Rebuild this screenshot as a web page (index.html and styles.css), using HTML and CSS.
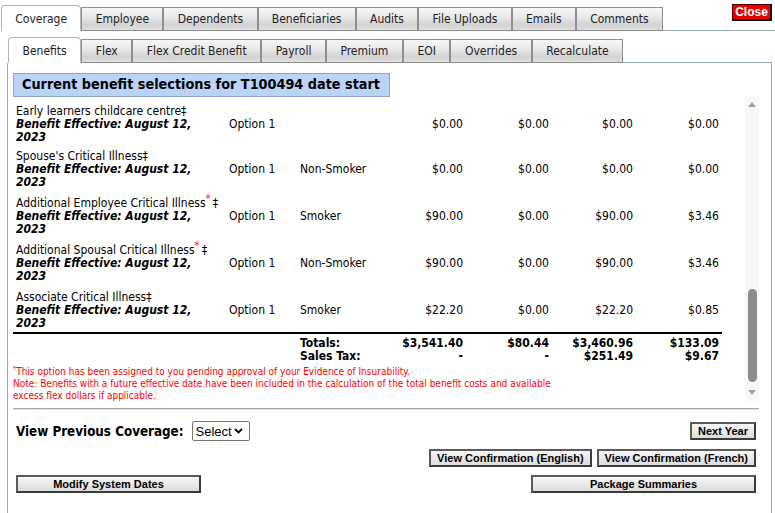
FILE: index.html
```html
<!DOCTYPE html>
<html lang="en">
<head>
<meta charset="utf-8">
<title>Coverage - Benefits</title>
<link rel="stylesheet" href="styles.css">
</head>
<body>
<div class="page">
  <div class="tabs top-tabs">
    <div class="tab active">Coverage</div>
    <div class="tab">Employee</div>
    <div class="tab">Dependents</div>
    <div class="tab">Beneficiaries</div>
    <div class="tab">Audits</div>
    <div class="tab">File Uploads</div>
    <div class="tab">Emails</div>
    <div class="tab">Comments</div>
    <div class="tab-fill top-fill"><button class="close-btn">Close</button></div>
  </div>

  <div class="section">
    <div class="tabs sub-tabs">
      <div class="tab active">Benefits</div>
      <div class="tab">Flex</div>
      <div class="tab">Flex Credit Benefit</div>
      <div class="tab">Payroll</div>
      <div class="tab">Premium</div>
      <div class="tab">EOI</div>
      <div class="tab">Overrides</div>
      <div class="tab">Recalculate</div>
      <div class="tab-fill sub-fill"></div>
    </div>

    <div class="panel">
      <div class="title-box">Current benefit selections for T100494 date start</div>

      <div class="scroll-area">
        <div class="scroll-content">
          <table class="benefits">
            <colgroup>
              <col class="c-name"><col class="c-opt"><col class="c-tier">
              <col class="c-amt"><col class="c-amt"><col class="c-amt3"><col class="c-amt">
            </colgroup>
            <tbody>
              <tr class="first-row">
                <td class="name">Early learners childcare centre&#8225;<br><b class="eff">Benefit Effective: August 12, 2023</b></td>
                <td>Option 1</td><td></td>
                <td class="amt">$0.00</td><td class="amt">$0.00</td><td class="amt">$0.00</td><td class="amt">$0.00</td>
              </tr>
              <tr>
                <td class="name">Spouse's Critical Illness&#8225;<br><b class="eff">Benefit Effective: August 12, 2023</b></td>
                <td>Option 1</td><td>Non-Smoker</td>
                <td class="amt">$0.00</td><td class="amt">$0.00</td><td class="amt">$0.00</td><td class="amt">$0.00</td>
              </tr>
              <tr>
                <td class="name">Additional Employee Critical Illness<sup class="eoi">*</sup>&#8201;&#8225;<br><b class="eff">Benefit Effective: August 12, 2023</b></td>
                <td>Option 1</td><td>Smoker</td>
                <td class="amt">$90.00</td><td class="amt">$0.00</td><td class="amt">$90.00</td><td class="amt">$3.46</td>
              </tr>
              <tr>
                <td class="name">Additional Spousal Critical Illness<sup class="eoi">*</sup>&#8201;&#8225;<br><b class="eff">Benefit Effective: August 12, 2023</b></td>
                <td>Option 1</td><td>Non-Smoker</td>
                <td class="amt">$90.00</td><td class="amt">$0.00</td><td class="amt">$90.00</td><td class="amt">$3.46</td>
              </tr>
              <tr class="last-row">
                <td class="name">Associate Critical Illness&#8225;<br><b class="eff">Benefit Effective: August 12, 2023</b></td>
                <td>Option 1</td><td>Smoker</td>
                <td class="amt">$22.20</td><td class="amt">$0.00</td><td class="amt">$22.20</td><td class="amt">$0.85</td>
              </tr>
              <tr class="totals first">
                <td></td><td></td><td class="label">Totals:</td>
                <td class="amt">$3,541.40</td><td class="amt">$80.44</td><td class="amt">$3,460.96</td><td class="amt">$133.09</td>
              </tr>
              <tr class="totals">
                <td></td><td></td><td class="label">Sales Tax:</td>
                <td class="amt">-</td><td class="amt">-</td><td class="amt">$251.49</td><td class="amt">$9.67</td>
              </tr>
            </tbody>
          </table>
          <div class="notes">
            <p><sup>*</sup>This option has been assigned to you pending approval of your Evidence of Insurability.</p>
            <p>Note: Benefits with a future effective date have been included in the calculation of the total benefit costs and available excess flex dollars if applicable.</p>
          </div>
        </div>
        <div class="scrollbar">
          <div class="arrow up"></div>
          <div class="track"><div class="thumb"></div></div>
          <div class="arrow down"></div>
        </div>
      </div>

      <div class="separator"></div>

      <div class="actions">
        <div class="row">
          <label class="prev-label">View Previous Coverage:
            <span class="select-box">Select<svg class="chev" width="9" height="6" viewBox="0 0 9 6"><path d="M1 1 L4.5 4.5 L8 1" fill="none" stroke="#000" stroke-width="1.8"/></svg></span>
          </label>
          <button class="btn">Next Year</button>
        </div>
        <div class="row row-right">
          <button class="btn">View Confirmation (English)</button>
          <button class="btn">View Confirmation (French)</button>
        </div>
        <div class="row">
          <button class="btn btn-modify">Modify System Dates</button>
          <button class="btn btn-package">Package Summaries</button>
        </div>
      </div>
    </div>
  </div>
</div>
</body>
</html>
```

FILE: styles.css
```css
* { box-sizing: border-box; }

html, body {
  margin: 0;
  padding: 0;
  background: #fff;
}

body {
  font-family: "DejaVu Sans Condensed", "DejaVu Sans", sans-serif;
  font-size: 12px;
  color: #000;
}

.page {
  width: 775px;
  height: 513px;
  overflow: hidden;
  padding-top: 4px;
}

/* ---------- tabs ---------- */
.tabs {
  display: flex;
  align-items: flex-end;
}

.top-tabs {
  height: 27px;
  padding-left: 1px;
}

.tab {
  height: 24px;
  padding: 0 13.3px;
  display: flex;
  align-items: center;
  border: 1px solid #8e8e8e;
  background: linear-gradient(to bottom, #f7f7f7 0%, #e9e9e9 40%, #d3d3d3 75%, #dedede 100%);
  color: #222;
  font-size: 12px;
  white-space: nowrap;
}

.sub-tabs .tab {
  padding: 0 13.5px;
}

.tab.active {
  height: 26px;
  background: #fff;
  border-color: #b4b4b4;
  border-bottom-color: #fff;
  border-radius: 4px 4px 0 0;
  padding-top: 1px;
}

.tab-fill {
  flex: 1;
  align-self: stretch;
  border-bottom: 1px solid #9aabb8;
}

.top-fill {
  display: flex;
  justify-content: flex-end;
  align-items: flex-start;
}

.close-btn {
  width: 40px;
  height: 17px;
  margin: 0 3px 0 0;
  padding: 0;
  background: #e60000;
  color: #fff;
  font-family: "Liberation Sans", Arial, sans-serif;
  font-weight: bold;
  font-size: 12px;
  line-height: 13px;
  border: 1px solid #5a0000;
  border-right: 2px solid #111;
  border-bottom: 2px solid #111;
}

.section {
  margin: 6px 3px 0 7px;
}

.sub-tabs {
  height: 26px;
  padding-left: 1px;
}

/* ---------- panel ---------- */
.panel {
  border-left: 1px solid #9aabb8;
  border-right: 1px solid #9aabb8;
  padding: 10px 12px 0 5px;
  height: 460px;
}

.title-box {
  display: inline-block;
  width: 377px;
  height: 24px;
  line-height: 21px;
  padding-left: 8px;
  background: #bad3f8;
  border: 1px solid #8da6c6;
  font-weight: bold;
  font-size: 14.3px;
  white-space: nowrap;
  vertical-align: top;
}

.scroll-area {
  display: flex;
  height: 305px;
}

.scroll-content {
  flex: 1;
  overflow: hidden;
}

.benefits {
  width: 709px;
  table-layout: fixed;
  border-collapse: collapse;
  margin-top: 4px;
}

.c-name { width: 213px; }
.c-opt { width: 71px; }
.c-tier { width: 83px; }
.c-amt { width: 86px; }
.c-amt3 { width: 84px; }

.benefits td {
  padding: 4px 3px;
  line-height: 13px;
  vertical-align: middle;
  white-space: nowrap;
}

.benefits .first-row td {
  padding-bottom: 2px;
}

.benefits .last-row td {
  padding-bottom: 2px;
}

.benefits td.name {
  vertical-align: top;
  white-space: normal;
}

.eff {
  font-style: italic;
  font-weight: bold;
}

.benefits td.amt {
  text-align: right;
}

.eoi {
  color: #f00;
  font-size: 11px;
  line-height: 0;
  vertical-align: 5px;
}

.benefits .totals td {
  font-weight: bold;
  padding-top: 0;
  padding-bottom: 0;
  line-height: 13px;
}

.benefits .totals.first td {
  border-top: 2px solid #000;
  padding-top: 3px;
}

.notes {
  width: 545px;
  margin-top: 3px;
  color: #f00;
  font-size: 10px;
  line-height: 12px;
}

.notes p {
  margin: 0;
}

.notes sup {
  font-size: 7px;
  line-height: 0;
}

/* fake scrollbar */
.scrollbar {
  width: 14px;
  display: flex;
  flex-direction: column;
  align-items: center;
  background: #f8f8f8;
}

.arrow {
  width: 0;
  height: 0;
  border-left: 4px solid transparent;
  border-right: 4px solid transparent;
  margin: 4px 0;
}

.arrow.up {
  border-bottom: 5px solid #a3a3a3;
  margin-top: 5px;
}

.arrow.down {
  border-top: 5px solid #a3a3a3;
  margin-bottom: 7px;
}

.track {
  flex: 1;
  width: 100%;
  display: flex;
  flex-direction: column;
  justify-content: flex-end;
  align-items: center;
  padding-bottom: 4px;
}

.thumb {
  width: 9px;
  height: 93px;
  border-radius: 5px;
  background: #8c8c8c;
}

.separator {
  margin-top: 6px;
  border-top: 1px solid #a5a5a5;
  border-bottom: 1px solid #e4e4e4;
}

/* ---------- actions ---------- */
.actions {
  padding: 11px 3px 0 3px;
  display: flex;
  flex-direction: column;
  gap: 8px;
}

.row {
  display: flex;
  justify-content: space-between;
  align-items: center;
}

.row-right {
  justify-content: flex-end;
  gap: 5px;
}

.prev-label {
  font-weight: bold;
  font-size: 13.3px;
  display: flex;
  align-items: center;
  gap: 8px;
}

.select-box {
  width: 58px;
  height: 20px;
  display: flex;
  align-items: center;
  gap: 2px;
  padding: 0 0 0 3px;
  font-family: "Liberation Sans", Arial, sans-serif;
  font-weight: normal;
  font-size: 13px;
  border: 1px solid #767676;
  border-radius: 2px;
  background: #fff;
  color: #000;
}

.chev {
  flex: none;
}

.btn {
  height: 18px;
  padding: 0 6px;
  font-family: "Liberation Sans", Arial, sans-serif;
  font-weight: bold;
  font-size: 11px;
  line-height: 13px;
  color: #000;
  background: linear-gradient(to bottom, #f6f6f6, #dcdcdc);
  border: 2px solid #3c3c3c;
  border-top-color: #5a5a5a;
  border-left-color: #5a5a5a;
}

.btn-modify {
  width: 185px;
}

.btn-package {
  width: 225px;
}
```
